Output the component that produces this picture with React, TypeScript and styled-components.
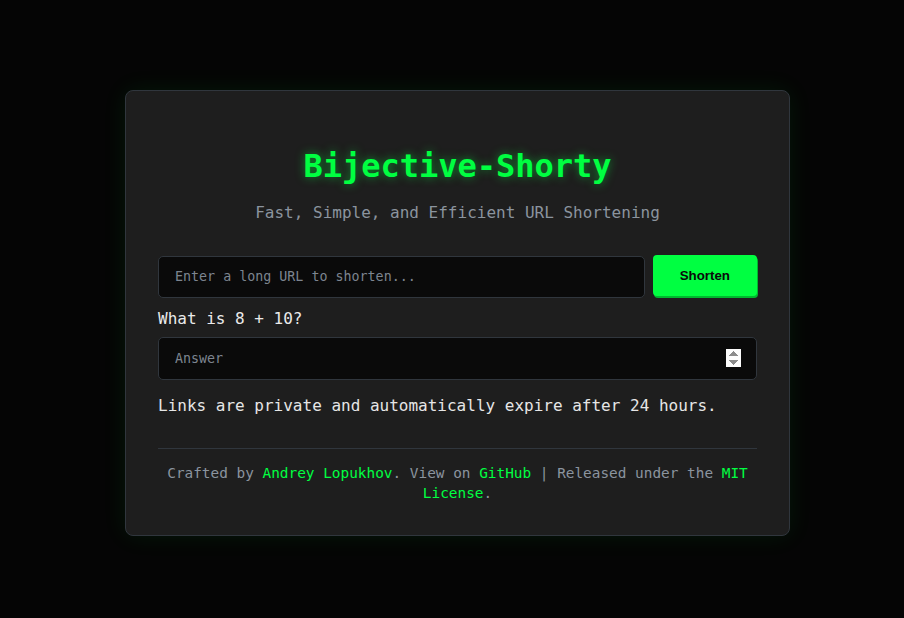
import styled, { createGlobalStyle } from 'styled-components';

const GlobalStyle = createGlobalStyle`
  html, body {
    margin: 0;
    padding: 0;
    background: #050505;
  }
  body {
    font-family: "DejaVu Sans Mono", "Liberation Mono", monospace;
    color: #e0e0e0;
  }
`;

const Page = styled.div`
  min-height: 100vh;
  box-sizing: border-box;
  display: flex;
  align-items: center;
  justify-content: center;
  padding: 7px 0 0 11px;
`;

const Card = styled.main`
  width: 599px;
  padding: 32px;
  background: #1e1e1e;
  border: 1px solid #30363d;
  border-radius: 8px;
  box-shadow: 0 0 24px rgba(0, 255, 65, 0.08);
`;

const Title = styled.h1`
  margin: 23px 0 0;
  font-size: 32px;
  line-height: 40px;
  font-weight: 700;
  text-align: center;
  color: #00ff41;
  text-shadow: 0 0 10px rgba(0, 255, 65, 0.5);
`;

const Subtitle = styled.p`
  margin: 15px 0 0;
  font-size: 16px;
  line-height: 24px;
  text-align: center;
  color: #8b949e;
`;

const UrlRow = styled.form`
  display: flex;
  align-items: flex-start;
  gap: 8px;
  margin-top: 30px;
`;

const TextInput = styled.input`
  flex: 1;
  min-width: 0;
  height: 42px;
  box-sizing: border-box;
  margin: 1px 0 0;
  padding: 0 16px;
  background: #0a0a0a;
  border: 1px solid #30363d;
  border-radius: 5px;
  color: #e0e0e0;
  font-family: "DejaVu Sans Mono", "Liberation Mono", monospace;
  font-size: 13.33px;
  outline: none;
  color-scheme: light;

  &::placeholder {
    color: #7d8590;
  }

  &::-webkit-inner-spin-button {
    opacity: 1;
    height: 19px;
  }
`;

const ShortenButton = styled.button`
  height: 41px;
  padding: 0 27px;
  background: #00ff41;
  border: none;
  border-radius: 4px;
  box-shadow: 1px 2px 0 #00b82f;
  color: #0a0a0a;
  font-family: "Liberation Sans", Arial, sans-serif;
  font-size: 13.33px;
  font-weight: 700;
  cursor: pointer;
`;

const Question = styled.label`
  display: block;
  margin-top: 9px;
  font-size: 16px;
  line-height: 24px;
  color: #eaeaea;
`;

const AnswerInput = styled(TextInput)`
  display: block;
  width: 100%;
  height: 43px;
  margin-top: 6px;
  padding-right: 15px;
`;

const Notice = styled.p`
  margin: 14px 0 0;
  font-size: 16px;
  line-height: 24px;
  color: #e6e6e6;
`;

const Divider = styled.hr`
  margin: 30px 0 0;
  border: none;
  border-top: 1px solid #30363d;
`;

const Footer = styled.footer`
  margin-top: 14px;
  font-size: 14.4px;
  line-height: 20px;
  text-align: center;
  color: #8b949e;
`;

const Link = styled.a`
  color: #00ff41;
  text-decoration: none;
`;

export default function App() {
  return (
    <>
      <GlobalStyle />
      <Page>
        <Card>
          <Title>Bijective-Shorty</Title>
          <Subtitle>Fast, Simple, and Efficient URL Shortening</Subtitle>
          <UrlRow onSubmit={(e) => e.preventDefault()}>
            <TextInput type="url" placeholder="Enter a long URL to shorten..." />
            <ShortenButton type="submit">Shorten</ShortenButton>
          </UrlRow>
          <Question htmlFor="answer">What is 8 + 10?</Question>
          <AnswerInput id="answer" type="number" placeholder="Answer" />
          <Notice>Links are private and automatically expire after 24 hours.</Notice>
          <Divider />
          <Footer>
            Crafted by <Link href="#">Andrey Lopukhov</Link>. View on{' '}
            <Link href="#">GitHub</Link> | Released under the{' '}
            <Link href="#">MIT License</Link>.
          </Footer>
        </Card>
      </Page>
    </>
  );
}
